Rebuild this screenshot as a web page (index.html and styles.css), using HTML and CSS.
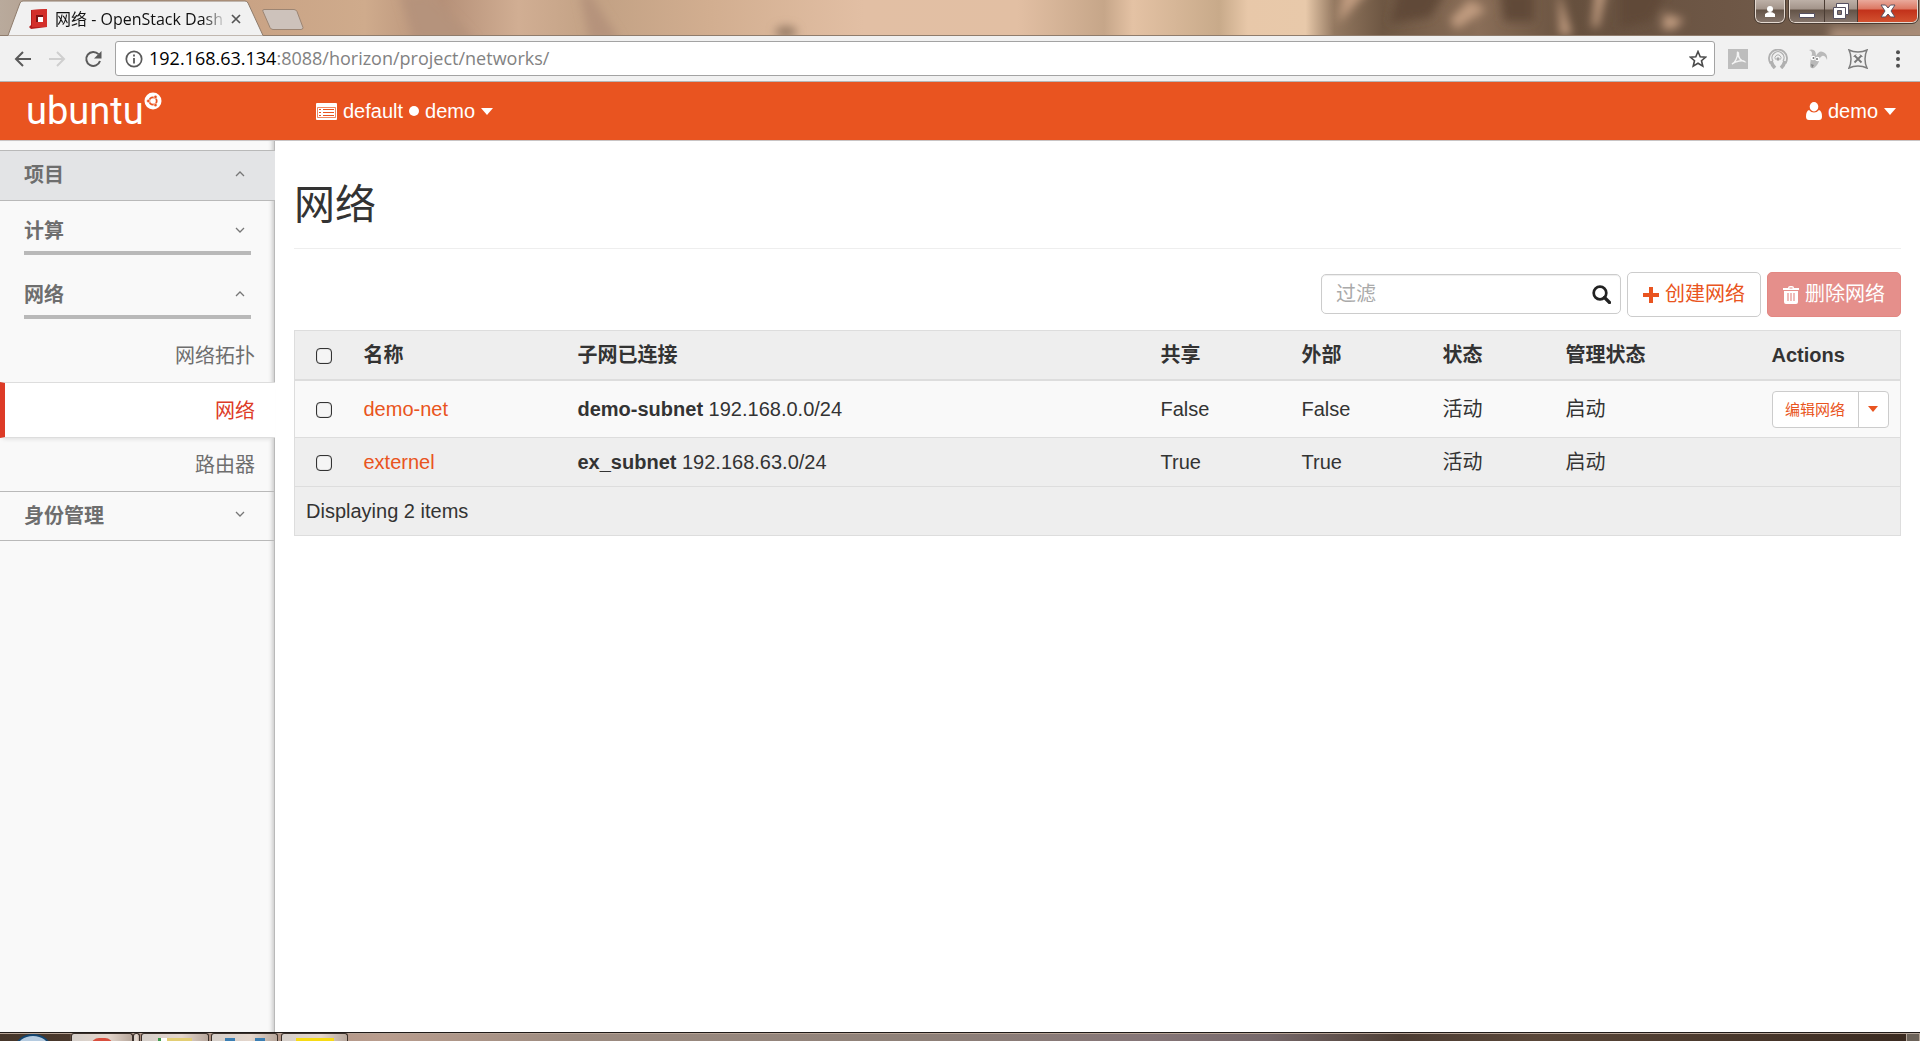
FILE: index.html
```html
<!DOCTYPE html>
<html lang="zh-CN">
<head>
<meta charset="utf-8">
<title>网络 - OpenStack Dashboard</title>
<link rel="stylesheet" href="styles.css">
</head>
<body>
<div class="titlebar">
  <svg class="wallpaper" viewBox="0 0 1920 36" preserveAspectRatio="none" aria-hidden="true">
    <defs>
      <linearGradient id="sky" x1="0" x2="1">
        <stop offset="0" stop-color="#b9aa9c"/><stop offset=".06" stop-color="#a98f7c"/><stop offset=".13" stop-color="#c9a385"/>
        <stop offset=".19" stop-color="#cfab8c"/><stop offset=".23" stop-color="#b59078"/><stop offset=".27" stop-color="#d1ae93"/>
        <stop offset=".31" stop-color="#c2a184"/><stop offset=".37" stop-color="#d2ae90"/><stop offset=".45" stop-color="#e2bfa4"/>
        <stop offset=".53" stop-color="#e2bfa3"/><stop offset=".575" stop-color="#c6a689"/><stop offset=".59" stop-color="#e4c2a4"/>
        <stop offset=".635" stop-color="#c8aa8a"/><stop offset=".65" stop-color="#e8c8a9"/><stop offset=".68" stop-color="#e8c9aa"/>
        <stop offset=".695" stop-color="#937860"/><stop offset=".72" stop-color="#6e5743"/><stop offset=".77" stop-color="#8a6e58"/><stop offset=".82" stop-color="#66503e"/>
        <stop offset=".9" stop-color="#6e5746"/><stop offset=".97" stop-color="#75604f"/><stop offset="1" stop-color="#a08a78"/>
      </linearGradient>
      <filter id="soft" x="-20%" y="-100%" width="140%" height="300%"><feGaussianBlur stdDeviation="5"/></filter>
    </defs>
    <rect width="1920" height="36" fill="url(#sky)"/>
    <g filter="url(#soft)">
      <path fill="#b5937b" d="M400-6h30l45 48h-60zM580-6h10l30 48h-30z"/>
      <path fill="#c19c80" d="M1344-16h30l-36 40zM1470 0l16 10-30 20-6-10zM1558-10l14 46h-12zM1596-16h12l-10 44h-6zM1664 14l20 6-10 10h-12z"/>
      <path fill="#604a39" d="M1400-16h50l-20 34-40 6zM1500-10h34v32h-30zM1620-14h50l-20 36-30 6z"/>
      <path fill="#a98c77" d="M1830 28h110v24h-110z"/>
      <ellipse cx="786" cy="33" rx="11" ry="6" fill="#957a65"/>
    </g>
  </svg>
  <svg class="tabshape" width="320" height="36" viewBox="0 0 320 36" aria-hidden="true">
    <path d="M0 35.500H8L20 3q1-2 3-2h222q2 0 3 2l15 32.500H320" fill="#f1f1f1" stroke="#8f7c6c"/>
    <path d="M264 9.500h30q2 0 3 2l6 16q0 2-2 2h-28q-2 0-3-2l-7-16q-1-2 1-2z" fill="#cdc2bb" stroke="#9c8573"/>
  </svg>
  <div class="tab">
    <svg width="20" height="20" viewBox="0 0 20 20" aria-hidden="true"><path d="M3 1l16-1v18l-16 2-2-2 2-2V1z" fill="#b51d1c"/><path d="M4 1l15-1v18H4z" fill="#d32f2a"/><path d="M8 6h7v7H8z" fill="#fff"/><path d="M8 6h7v2h-5v5H8z" fill="#7d1212"/></svg>
    <span class="tab-title">网络 - OpenStack Dash</span>
    <button class="plain" aria-label="关闭标签页"><svg width="10" height="10" viewBox="0 0 10 10"><path d="M1 1l8 8M9 1l-8 8" stroke="#555" stroke-width="1.700"/></svg></button>
  </div>
  <div class="winbuttons">
    <button class="wb user" aria-label="用户"><svg width="12" height="13" viewBox="0 0 12 13"><circle cx="6" cy="4" r="3" fill="#fff"/><path d="M1 12V9q2-2 5-2t5 2v3z" fill="#fff"/></svg></button>
    <div class="wgroup">
      <button class="wb min" aria-label="最小化"><svg width="18" height="18" viewBox="0 0 18 18"><path d="M1.500 11.500h15v4h-15z" fill="#fff" stroke="#555060"/></svg></button>
      <button class="wb max" aria-label="还原"><svg width="18" height="18" viewBox="0 0 18 18"><path d="M4.500 1.500h12v11h-3v4h-12v-11h3z" fill="#fff" stroke="#555060"/><path d="M5.500 8.500h4v4h-4z" fill="#85756b" stroke="#555060"/><path d="M4.500 5.500h9v7" fill="none" stroke="#555060"/></svg></button>
      <button class="wb close" aria-label="关闭"><svg width="16" height="16" viewBox="0 0 16 16"><path d="M1 2h4.500L8 5l2.500-3H15l-4 6 4 6h-4.500L8 11l-2.500 3H1l4-6z" fill="#fff" stroke="#5a5060"/></svg></button>
    </div>
  </div>
</div>
<div class="toolbar">
  <div class="nav">
    <button class="plain" aria-label="后退"><svg width="17" height="16" viewBox="0 0 17 16"><path d="M9 1L2 8l7 7M2 8h15" fill="none" stroke="#5a5a5a" stroke-width="2"/></svg></button>
    <button class="plain" aria-label="前进"><svg width="17" height="16" viewBox="0 0 17 16"><path d="M8 1l7 7-7 7M15 8H0" fill="none" stroke="#cfcfcf" stroke-width="2"/></svg></button>
    <button class="plain" aria-label="刷新"><svg width="18" height="18" viewBox="0 0 18 18"><path d="M14.500 4.200A7 7 0 1 0 16 11" fill="none" stroke="#5a5a5a" stroke-width="2"/><path d="M17.500 1v7.500H10z" fill="#5a5a5a"/></svg></button>
  </div>
  <div class="omnibox">
    <svg width="18" height="18" viewBox="0 0 18 18" aria-hidden="true"><circle cx="9" cy="9" r="7.700" fill="none" stroke="#5a5a5a" stroke-width="1.700"/><path d="M9 8v5.500M9 4.500v2" stroke="#5a5a5a" stroke-width="1.800"/></svg>
    <span class="url"><b>192.168.63.134</b>:8088/horizon/project/networks/</span>
    <button class="plain" aria-label="收藏"><svg width="18" height="18" viewBox="0 0 18 18"><path d="M9 1.500l2.200 5.200 5.500.4-4.200 3.600 1.300 5.500L9 13.300l-4.800 2.900 1.300-5.500L1.300 7.100l5.500-.4z" fill="none" stroke="#4a4a4a" stroke-width="1.600"/></svg></button>
  </div>
  <div class="exts">
    <button class="plain" aria-label="PDF"><svg width="20" height="20" viewBox="0 0 20 20"><path d="M0 0h20v20H0z" fill="#bdbdbd"/><path d="M4 15c3-1 6-7 5.500-11.500C9 3 11 3 10.500 5 10 9 13 12 16.500 12.500 15 11 8 12 4 15z" fill="none" stroke="#f4f4f4" stroke-width="1.400"/></svg></button>
    <button class="plain" aria-label="Cast"><svg width="20" height="20" viewBox="0 0 20 20"><g fill="none" stroke="#b0b0b0"><path d="M2.500 14.500A9 9 0 1 1 17.500 14.500" stroke-width="1.800"/><path d="M5 12a6 6 0 1 1 10 0" stroke-width="1.300"/><path d="M7.500 10.500a3 3 0 1 1 5 0" stroke-width="1"/><path d="M3 12q1 4 4 7M17 12q-1 4-4 7" stroke-width="3.500"/></g><circle cx="10" cy="10" r="1.700" fill="#a5a5a5"/></svg></button>
    <button class="plain" aria-label="Goat"><svg width="20" height="20" viewBox="0 0 20 20"><path d="M1 1q7-2 7 6 3-6 7-4 5 2 4 8-2-5-5-4-2 1-3 4 0 4-5 8-4 1-4-3l1-8q2-4 0-6z" fill="#b9b9b9"/><circle cx="5" cy="9" r="2.300" fill="#fff"/><circle cx="9.500" cy="10" r="2.300" fill="#fff"/><circle cx="5.500" cy="9" r="1" fill="#777"/><circle cx="9" cy="10" r="1" fill="#777"/><path d="M3 15l3 1-2 3z" fill="#888"/></svg></button>
    <button class="plain" aria-label="Tools"><svg width="20" height="20" viewBox="0 0 20 20"><path d="M1 1q4 2 9 2t9-2q-2 4-2 9t2 9q-4-2-9-2t-9 2q2-4 2-9T1 1z" fill="none" stroke="#7d7d7d" stroke-width="1.500"/><path d="M6.500 6.500l7 7M13.500 6.500l-7 7" stroke="#777" stroke-width="1.800"/><path d="M5.500 8l2.500-2.500M12 5.500l2.500 2.500" stroke="#777"/></svg></button>
    <button class="plain dots" aria-label="菜单"><svg width="4" height="18" viewBox="0 0 4 18"><g fill="#505050"><circle cx="2" cy="2.200" r="2"/><circle cx="2" cy="9" r="2"/><circle cx="2" cy="15.800" r="2"/></g></svg></button>
  </div>
</div>
<header class="topbar">
  <a class="brand" href="#">ubuntu<svg width="18" height="18" viewBox="0 0 18 18" aria-hidden="true"><circle cx="9" cy="9" r="8.500" fill="#fff"/><circle cx="9" cy="9" r="3.700" fill="none" stroke="#e95420" stroke-width="1.800"/><g fill="#e95420" stroke="#fff" stroke-width=".6"><circle cx="4.300" cy="9" r="1.700"/><circle cx="11.500" cy="4.900" r="1.700"/><circle cx="11.500" cy="13.100" r="1.700"/></g></svg></a>
  <button class="menu context"><svg width="21" height="17" viewBox="0 0 21 17" aria-hidden="true"><path d="M1 0h19q1 0 1 1v15q0 1-1 1H1q-1 0-1-1V1q0-1 1-1z" fill="#fff"/><path d="M3 6.500h2M3 9.500h2M3 12.500h2M7 6.500h11M7 9.500h11M7 12.500h11" stroke="#e95420"/><path d="M1.500 4.500h18v10h-18z" fill="none" stroke="#e95420" stroke-width=".7"/></svg><span>default</span><i class="dot"></i><span>demo</span><i class="caret"></i></button>
  <button class="menu account"><svg width="16" height="18" viewBox="0 0 16 18" aria-hidden="true"><ellipse cx="8" cy="4.700" rx="4.300" ry="4.700" fill="#fff"/><path d="M3 8q2 2.500 5 2.500T13 8q3 1 3 6.500 0 3.500-3 3.500H3q-3 0-3-3.500Q0 9 3 8z" fill="#fff"/></svg><span>demo</span><i class="caret"></i></button>
</header>
<div class="body">
  <nav class="sidebar">
    <a class="panel open" href="#">项目<svg class="chev" width="10" height="6" viewBox="0 0 10 6"><path d="M1 5l4-4 4 4"/></svg></a>
    <a class="group" href="#">计算<svg class="chev" width="10" height="6" viewBox="0 0 10 6"><path d="M1 1l4 4 4-4"/></svg></a>
    <a class="group" href="#">网络<svg class="chev" width="10" height="6" viewBox="0 0 10 6"><path d="M1 5l4-4 4 4"/></svg></a>
    <a class="item" href="#">网络拓扑</a>
    <a class="item active" href="#">网络</a>
    <a class="item" href="#">路由器</a>
    <a class="panel" href="#">身份管理<svg class="chev" width="10" height="6" viewBox="0 0 10 6"><path d="M1 1l4 4 4-4"/></svg></a>
  </nav>
  <main class="main">
    <h1>网络</h1>
    <div class="actions">
      <div class="filter"><input type="text" placeholder="过滤" aria-label="过滤"><button class="plain" aria-label="搜索"><svg width="19" height="19" viewBox="0 0 19 19"><circle cx="8" cy="8" r="6.300" fill="none" stroke="#222" stroke-width="2.700"/><path d="M12.500 12.500l5 5" stroke="#222" stroke-width="3.200" stroke-linecap="round"/></svg></button></div>
      <button class="btn"><svg width="16" height="16" viewBox="0 0 16 16" aria-hidden="true"><path d="M6 0h4v6h6v4h-6v6H6v-6H0V6h6z" fill="#e95420"/></svg>创建网络</button>
      <button class="btn danger"><svg width="16" height="18" viewBox="0 0 16 18" aria-hidden="true"><path d="M5 2q0-2 2-2h2q2 0 2 2h5v2H0V2zM1 5h14v11q0 2-2 2H3q-2 0-2-2z" fill="#fff"/><path d="M5 7v8M8 7v8M11 7v8" stroke="#e58f8b" stroke-width="1.200"/><path d="M6.500 2h3" stroke="#e58f8b"/></svg>删除网络</button>
    </div>
    <table class="grid">
      <colgroup><col class="c-check"><col class="c-name"><col><col class="c-flag"><col class="c-flag"><col class="c-status"><col class="c-admin"><col class="c-act"></colgroup>
      <thead><tr><th><input type="checkbox" aria-label="全选"></th><th>名称</th><th>子网已连接</th><th>共享</th><th>外部</th><th>状态</th><th>管理状态</th><th>Actions</th></tr></thead>
      <tbody>
        <tr class="odd"><td><input type="checkbox" aria-label="demo-net"></td><td><a href="#">demo-net</a></td><td><strong>demo-subnet</strong> 192.168.0.0/24</td><td>False</td><td>False</td><td>活动</td><td>启动</td><td><div class="split"><button>编辑网络</button><button aria-label="更多"><i class="caret small"></i></button></div></td></tr>
        <tr><td><input type="checkbox" aria-label="externel"></td><td><a href="#">externel</a></td><td><strong>ex_subnet</strong> 192.168.63.0/24</td><td>True</td><td>True</td><td>活动</td><td>启动</td><td></td></tr>
      </tbody>
      <tfoot><tr><td colspan="8">Displaying 2 items</td></tr></tfoot>
    </table>
  </main>
</div>
<footer class="taskbar">
  <svg class="orb" width="34" height="8" viewBox="0 0 34 8" aria-hidden="true"><ellipse cx="17" cy="14" rx="17" ry="13" fill="#b5cbe0" stroke="#14456f" stroke-width="2"/></svg>
  <div class="task t1"><i class="ico red"></i></div>
  <div class="task t2"></div>
  <div class="task t3"><i class="ico folder"></i></div>
  <div class="task t4"><i class="ico blue"></i><i class="ico blue"></i></div>
  <div class="task t5"><i class="ico yellow"></i></div>
  <div class="peek"></div>
</footer>
</body>
</html>
```
FILE: styles.css
```css
* { box-sizing: border-box; }
body {
  margin: 0;
  min-height: 100vh;
  display: flex;
  flex-direction: column;
  font: 20px/29px "Liberation Sans", "Noto Sans CJK SC", sans-serif;
  color: #333;
  background: #fff;
}
button, input { font: inherit; color: inherit; margin: 0; }
a { text-decoration: none; color: #e95420; }
svg { display: block; flex: none; }
.plain { border: 0; padding: 0; background: none; }

/* window title bar */
.titlebar { position: relative; height: 36px; display: flex; justify-content: space-between; overflow: hidden; }
.wallpaper { position: absolute; inset: 0; width: 100%; height: 36px; border-bottom: 1px solid #8f7c6c; }
.tabshape { position: absolute; left: 0; top: 0; }
.tab { position: relative; display: flex; align-items: center; width: 241px; padding: 2px 0 0 28px; }
.tab-title {
  flex: 1; margin: 0 4px 0 7px; white-space: nowrap;
  font: 16px/24px "Open Sans", "Noto Sans CJK SC", sans-serif; color: #111;
  mask-image: linear-gradient(90deg, #000 86%, transparent);
}
.winbuttons { position: relative; display: flex; align-items: flex-start; gap: 4px; padding-right: 2px; }
.wb {
  height: 23px; padding: 0; display: flex; align-items: center; justify-content: center;
  border: 0; background: linear-gradient(#bdb0a7 0, #a3948a 9px, #635347 10px, #84746a);
}
.user { width: 30px; border: 1px solid #e4d9d0; border-top: 0; border-radius: 0 0 6px 6px; outline: 1px solid #4a3c33; }
.wgroup { display: flex; overflow: hidden; border: 1px solid #e4d9d0; border-top: 0; border-radius: 0 0 6px 6px; outline: 1px solid #4a3c33; }
.wgroup .wb { height: 22px; }
.min { width: 34px; }
.max { width: 33px; border-left: 1px solid #4a3c33; }
.close { width: 60px; border-left: 1px solid #4a3c33; background: linear-gradient(#e9aa9c 0, #dc7762 9px, #c2311a 10px, #d2512f); }

/* browser toolbar */
.toolbar { height: 46px; display: flex; align-items: center; padding: 0 20px 0 14px; background: #f1f1f1; border-bottom: 1px solid #b5b5b5; }
.nav { display: flex; align-items: center; gap: 18px; width: 101px; }
.omnibox { flex: 1; height: 35px; display: flex; align-items: center; gap: 6px; padding: 0 7px 0 9px; background: #fff; border: 1px solid #a3a3a3; border-radius: 3px; }
.url { flex: 1; padding-bottom: 2px; font: 18px/26px "Open Sans", sans-serif; color: #828282; }
.url b { font-weight: 400; color: #000; }
.exts { display: flex; align-items: center; gap: 20px; padding-left: 13px; }
.dots { padding-left: 8px; }

/* horizon header */
.topbar { height: 59px; display: flex; align-items: center; padding: 0 24px 0 26px; color: #fff; background: #e95420; border-bottom: 1px solid #c9c4c4; }
.brand { display: flex; width: 290px; font: 38px/44px Roboto, sans-serif; color: #fff; }
.brand svg { margin-top: 3px; }
.menu { display: flex; align-items: center; gap: 6px; border: 0; padding: 0; background: none; }
.account { margin-left: auto; }
.dot { width: 10px; height: 10px; border-radius: 50%; background: #fff; }
.caret { border: 6px solid transparent; border-top: 7px solid currentColor; border-bottom: 0; }
.caret.small { border-width: 6px 5px 0; }

.body { flex: 1; display: flex; }

/* side navigation */
.sidebar { width: 275px; padding-top: 9px; background: #f9f9f9; border-right: 1px solid #b9b9b9; box-shadow: inset -5px 0 5px -4px #bbb; }
.sidebar a { display: flex; align-items: center; color: #6e6e6e; }
.chev { margin: 0 0 4px auto; fill: none; stroke: #777; stroke-width: 1.3; }
.panel { height: 50px; padding: 0 29px 0 24px; font-weight: 700; border: solid #b9b9b9; border-width: 1px 0; }
.panel.open { height: 51px; margin-right: -1px; padding-right: 30px; background: #e3e4e6; }
.group { height: 40px; margin: 14px 23px 24px 24px; padding: 0 6px 3px 0; font-weight: 700; border-bottom: 4px solid #b9b9b9; }
.group + .group { margin-bottom: 10px; }
.sidebar .item { height: 53px; justify-content: flex-end; padding: 2px 19px 0 0; }
.sidebar .item.active { height: 56px; margin-right: -1px; padding-right: 20px; color: #dd3b27; background: #fff; border: solid #ddd; border-width: 1px 0; border-left: 5px solid #dd3b27; box-shadow: 0 4px 4px -3px #ddd; }

/* page content */
.main { flex: 1; min-width: 0; padding: 35px 19px 0; }
h1 { margin: 0 0 23px; padding-bottom: 13px; font: 400 41px/59px "Liberation Sans", "Noto Sans CJK SC", sans-serif; border-bottom: 1px solid #eee; }
.actions { display: flex; justify-content: flex-end; gap: 6px; margin-bottom: 13px; }
.filter { width: 300px; height: 40px; margin-top: 2px; display: flex; align-items: center; padding: 0 9px 0 14px; border: 1px solid #ccc; border-radius: 5px; box-shadow: inset 0 1px 1px #eee; }
.filter input { flex: 1; min-width: 0; padding: 0; border: 0; outline: 0; background: none; }
.filter input::placeholder { color: #aaa; }
.btn { display: flex; align-items: center; gap: 6px; height: 45px; padding: 0 15px; color: #e95420; background: #fff; border: 1px solid #ccc; border-radius: 5px; }
.btn.danger { color: #fff; background: #e58f8b; border-color: #e38782; }

.grid { width: 100%; table-layout: fixed; border-collapse: collapse; border: 1px solid #ddd; background: #eee; }
.grid th, .grid td { height: 49px; padding: 1px 11px 0; text-align: left; border-top: 1px solid #ddd; }
.grid strong { font-weight: 700; }
.grid thead th { border-bottom: 2px solid #ddd; }
.grid .odd td { height: 58px; background: #f9f9f9; }
.c-check { width: 58px; }
.c-name { width: 214px; }
.c-flag { width: 141px; }
.c-status { width: 123px; }
.c-admin { width: 206px; }
.c-act { width: 140px; }
.grid input { display: block; appearance: none; width: 16px; height: 16px; margin: 1px 0 0 10px; border: 1px solid #333; border-radius: 4px; background: #f5f5f5; box-shadow: inset 0 0 1px #555; }
.split { display: flex; width: 117px; height: 37px; border: 1px solid #ccc; border-radius: 4px; background: #fff; color: #e95420; }
.split button { display: flex; align-items: center; justify-content: center; padding: 0; border: 0; background: none; font-size: 15px; flex: 1; }
.split button + button { flex: none; width: 30px; border-left: 1px solid #ccc; }

/* desktop task bar */
.taskbar {
  height: 9px; display: flex; overflow: hidden; padding-left: 16px;
  border-top: 1px solid #1f1a18; box-shadow: inset 0 1px #b5a294;
  background: linear-gradient(90deg, #46362a 0, #4a382c 70px, #a18374 72px, #b99d8e 20%, #9c8b80 30%, #8e8078 48%, #857577 60%, #76686a 66%, #4d3d33 73%, #5a4739 80%, #3a2a20);
}
.orb { margin: 1px 21px 0 0; }
.task { display: flex; justify-content: center; gap: 20px; height: 8px; padding-top: 4px; border: 1px solid #3a302a; border-bottom: 0; border-radius: 3px 3px 0 0; background: linear-gradient(90deg, #d5cfca, #e4d6cc 60%, #b7a79c); }
.t1 { width: 62px; }
.t2 { width: 7px; margin-right: 1px; }
.t3 { width: 68px; margin-right: 2px; }
.t4 { width: 67px; margin-right: 3px; }
.t5 { width: 67px; }
.ico { width: 10px; height: 8px; flex: none; }
.red { width: 22px; border-radius: 11px 11px 0 0; background: #d94f3e; }
.folder { width: 34px; background: linear-gradient(90deg, #3b9b4b 3px, #fff 3px 9px, #e3ce74 9px); }
.blue { background: #3b7fb4; }
.yellow { width: 38px; background: #f7db14; }
.peek { width: 14px; margin-left: auto; border: 1px solid #b5a79c; border-bottom: 0; background: #6c635a; }
```
